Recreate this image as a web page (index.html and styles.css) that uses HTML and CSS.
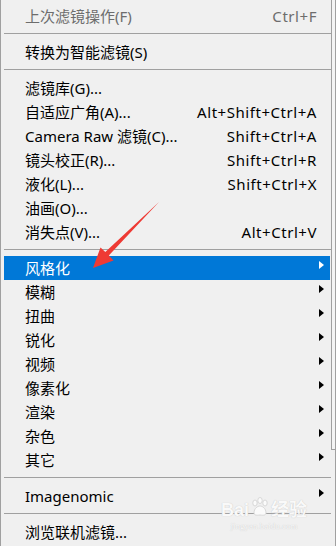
FILE: index.html
```html
<!DOCTYPE html>
<html lang="zh-CN">
<head>
<meta charset="utf-8">
<link rel="stylesheet" href="styles.css">
</head>
<body>
<div class="menu">
  <div class="item disabled"><span class="label">上次滤镜操作(F)</span><span class="key">Ctrl+F</span></div>
  <div class="sep"></div>
  <div class="item"><span class="label">转换为智能滤镜(S)</span></div>
  <div class="sep"></div>
  <div class="item"><span class="label">滤镜库(G)...</span></div>
  <div class="item"><span class="label">自适应广角(A)...</span><span class="key">Alt+Shift+Ctrl+A</span></div>
  <div class="item"><span class="label">Camera Raw 滤镜(C)...</span><span class="key">Shift+Ctrl+A</span></div>
  <div class="item"><span class="label">镜头校正(R)...</span><span class="key">Shift+Ctrl+R</span></div>
  <div class="item"><span class="label">液化(L)...</span><span class="key">Shift+Ctrl+X</span></div>
  <div class="item"><span class="label">油画(O)...</span></div>
  <div class="item"><span class="label">消失点(V)...</span><span class="key">Alt+Ctrl+V</span></div>
  <div class="sep"></div>
  <div class="item sub active"><span class="label">风格化</span><span class="arrow"></span></div>
  <div class="item sub"><span class="label">模糊</span><span class="arrow"></span></div>
  <div class="item sub"><span class="label">扭曲</span><span class="arrow"></span></div>
  <div class="item sub"><span class="label">锐化</span><span class="arrow"></span></div>
  <div class="item sub"><span class="label">视频</span><span class="arrow"></span></div>
  <div class="item sub"><span class="label">像素化</span><span class="arrow"></span></div>
  <div class="item sub"><span class="label">渲染</span><span class="arrow"></span></div>
  <div class="item sub"><span class="label">杂色</span><span class="arrow"></span></div>
  <div class="item sub"><span class="label">其它</span><span class="arrow"></span></div>
  <div class="sep"></div>
  <div class="item sub"><span class="label">Imagenomic</span><span class="arrow"></span></div>
  <div class="sep"></div>
  <div class="item"><span class="label">浏览联机滤镜...</span></div>

  <div class="watermark">
    <span class="wm-brand">Bai<svg class="wm-paw" width="20" height="20" viewBox="0 0 20 20"><g fill="#fbfbfb" stroke="#cfcfcf" stroke-width="0.8"><ellipse cx="5" cy="6" rx="2.2" ry="3"/><ellipse cx="10" cy="3.5" rx="2.2" ry="3"/><ellipse cx="15" cy="6" rx="2.2" ry="3"/><path d="M4 16 C4 11 8 9 10 9 C12 9 16 11 16 16 C16 18 14 18.5 10 18 C6 18.5 4 18 4 16 Z"/></g></svg>经验</span>
    <span class="wm-url">jingyan.baidu.com</span>
  </div>

  <svg class="annot" width="336" height="546" viewBox="0 0 336 546">
    <polygon points="158,202 107.8,255.6 112.5,260.6 92,268 99.5,247.4 104.3,252 " fill="#ee3a34"/>
  </svg>
</div>
</body>
</html>
```
FILE: styles.css
```css
html, body {
  margin: 0;
  padding: 0;
  background: #f0f0f0;
}

.menu {
  position: relative;
  width: 336px;
  height: 546px;
  box-sizing: border-box;
  padding: 4px 5px 0 3px;
  border-left: 1px solid #a0a0a0;
  border-right: 1px solid #a0a0a0;
  background: #f0f0f0;
  font-family: "Noto Sans", "Noto Sans CJK SC", sans-serif;
  font-size: 15px;
  color: #000;
  overflow: hidden;
}

.menu::after {
  content: "";
  position: absolute;
  top: 0;
  right: -1px;
  width: 4px;
  height: 449px;
  border-left: 1px solid #a0a0a0;
  border-bottom: 1px solid #a0a0a0;
  background: #f4f4f4;
}

.item {
  display: flex;
  align-items: center;
  height: 24px;
  padding-left: 21px;
  padding-right: 10px;
  line-height: 24px;
  white-space: nowrap;
}

.label {
  flex: 1;
}

.key {
  padding-right: 3px;
  letter-spacing: 0.55px;
}

.disabled {
  color: #6d6d6d;
}

.active {
  background: #0078d7;
  color: #fff;
}

.arrow {
  width: 0;
  height: 0;
  margin-top: -6px;
  margin-right: -4px;
  border-top: 4.5px solid transparent;
  border-bottom: 4.5px solid transparent;
  border-left: 5px solid #000;
}

.active .arrow {
  border-left-color: #fff;
}

.sep {
  height: 12px;
  display: flex;
  flex-direction: column;
  padding-top: 5px;
  box-sizing: border-box;
}

.sep::before {
  content: "";
  display: block;
  height: 1px;
  margin: 0 -1px 0 0;
  background: #a0a0a0;
}

.watermark {
  position: absolute;
  left: 220px;
  top: 500px;
  display: flex;
  flex-direction: column;
  align-items: center;
  color: #f9f9f9;
  text-shadow: 0 0 1px #bdbdbd;
  pointer-events: none;
}

.wm-brand {
  display: flex;
  align-items: center;
  font-family: "Liberation Sans", "Noto Sans CJK SC", sans-serif;
  font-size: 18px;
  font-weight: bold;
  line-height: 20px;
}

.wm-paw {
  margin: -6px 1px 0 1px;
}

.wm-url {
  font-family: "Liberation Serif", serif;
  font-size: 9px;
  line-height: 12px;
}

.annot {
  position: absolute;
  left: 0;
  top: 0;
  pointer-events: none;
}
```
